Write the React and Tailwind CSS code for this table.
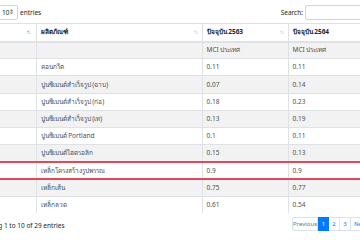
import React from 'react';

const rows = [
  { name: '', y1: 'MCI ประเทศ', y2: 'MCI ประเทศ' },
  { name: 'คอนกรีต', y1: '0.11', y2: '0.11' },
  { name: 'ปูนซีเมนต์สำเร็จรูป (ฉาบ)', y1: '0.07', y2: '0.14' },
  { name: 'ปูนซีเมนต์สำเร็จรูป (ก่อ)', y1: '0.18', y2: '0.23' },
  { name: 'ปูนซีเมนต์สำเร็จรูป (เท)', y1: '0.13', y2: '0.19' },
  { name: 'ปูนซีเมนต์ Portland', y1: '0.1', y2: '0.11' },
  { name: 'ปูนซีเมนต์ไฮดรอลิก', y1: '0.15', y2: '0.13' },
  { name: 'เหล็กโครงสร้างรูปพรรณ', y1: '0.9', y2: '0.9', marked: true },
  { name: 'เหล็กเส้น', y1: '0.75', y2: '0.77' },
  { name: 'เหล็กลวด', y1: '0.61', y2: '0.54' },
];

const SortIcon = ({ active }) => (
  <span className="text-[6px] tracking-[-1px] text-[#212529]">
    <span className={active ? 'opacity-90' : 'opacity-40'}>↑</span>
    <span className="opacity-40">↓</span>
  </span>
);

export default function App() {
  return (
    <div
      className="w-[360px] h-[240px] overflow-hidden bg-white text-[#212529]"
      style={{ fontFamily: '"Noto Sans", "Open Sans", sans-serif' }}
    >
      <div className="-ml-[24px] w-[398px] text-[6.5px]">
        {/* Top controls */}
        <div className="flex items-center justify-between pt-[5px] h-[20px]">
          <div className="flex items-center">
            <span className="w-[19px] shrink-0">Show</span>
            <div className="flex shrink-0 items-center justify-between w-[23px] h-[15px] border border-[#ced4da] rounded-[2px] pl-[6px] pr-[4px]">
              <span>10</span>
              <span className="text-[6px] text-[#495057]">⇕</span>
            </div>
            <span className="ml-[2px]">entries</span>
          </div>
          <div className="flex items-center gap-[2px]">
            <span>Search:</span>
            <div className="w-[69px] h-[15px] border border-[#ced4da] rounded-[2px]" />
          </div>
        </div>

        {/* Table */}
        <table className="mt-[3px] w-[398px] border-collapse table-fixed">
          <colgroup>
            <col className="w-[60px]" />
            <col className="w-[166px]" />
            <col className="w-[86px]" />
            <col className="w-[86px]" />
          </colgroup>
          <thead>
            <tr className="h-[18px] font-bold">
              <th className="border-t border-b-2 border-[#dee2e6] px-[5px] text-left">
                <div className="flex items-center justify-between">
                  <span>ลำดับ</span>
                  <SortIcon active />
                </div>
              </th>
              <th className="border border-b-2 border-[#dee2e6] px-[4px] text-left">
                <div className="flex items-center justify-between">
                  <span>ผลิตภัณฑ์</span>
                  <SortIcon />
                </div>
              </th>
              <th className="border border-b-2 border-[#dee2e6] px-[4px] text-left">
                <div className="flex items-center justify-between">
                  <span>ปัจจุบัน 2563</span>
                  <SortIcon />
                </div>
              </th>
              <th className="border-t border-l border-b-2 border-[#dee2e6] px-[4px] text-left">
                <div className="flex items-center justify-between">
                  <span>ปัจจุบัน 2564</span>
                  <SortIcon />
                </div>
              </th>
            </tr>
          </thead>
          <tbody className="text-[#495057]">
            {rows.map((r, i) => (
              <tr
                key={i}
                className={`h-[17.2px] ${i % 2 === 0 ? 'bg-[#f2f2f2]' : 'bg-white'} ${
                  r.marked ? 'outline-2 -outline-offset-1 outline-[#e2475a]' : ''
                }`}
              >
                <td className="border-t border-[#dee2e6] px-[5px]"></td>
                <td className="border-t border-l border-[#dee2e6] px-[4px]">{r.name}</td>
                <td className="border-t border-l border-[#dee2e6] px-[4px]">{r.y1}</td>
                <td className="border-t border-l border-[#dee2e6] px-[4px]">{r.y2}</td>
              </tr>
            ))}
          </tbody>
        </table>

        {/* Footer */}
        <div className="flex items-center justify-between mt-[4px] pr-[3px]">
          <span className="pt-[3px]">Showing 1 to 10 of 29 entries</span>
          <div className="flex h-[14px] text-[6px]">
            <span className="flex items-center justify-center w-[26px] border border-[#dee2e6] text-[#6c757d] rounded-l-[2px]">Previous</span>
            <span className="flex items-center justify-center w-[11px] bg-[#007bff] text-white border border-[#007bff]">1</span>
            <span className="flex items-center justify-center w-[11px] border border-l-0 border-[#dee2e6] text-[#007bff]">2</span>
            <span className="flex items-center justify-center w-[11px] border border-l-0 border-[#dee2e6] text-[#007bff]">3</span>
            <span className="flex items-center justify-center w-[20px] border border-l-0 border-[#dee2e6] text-[#007bff] rounded-r-[2px]">Next</span>
          </div>
        </div>
      </div>
    </div>
  );
}
